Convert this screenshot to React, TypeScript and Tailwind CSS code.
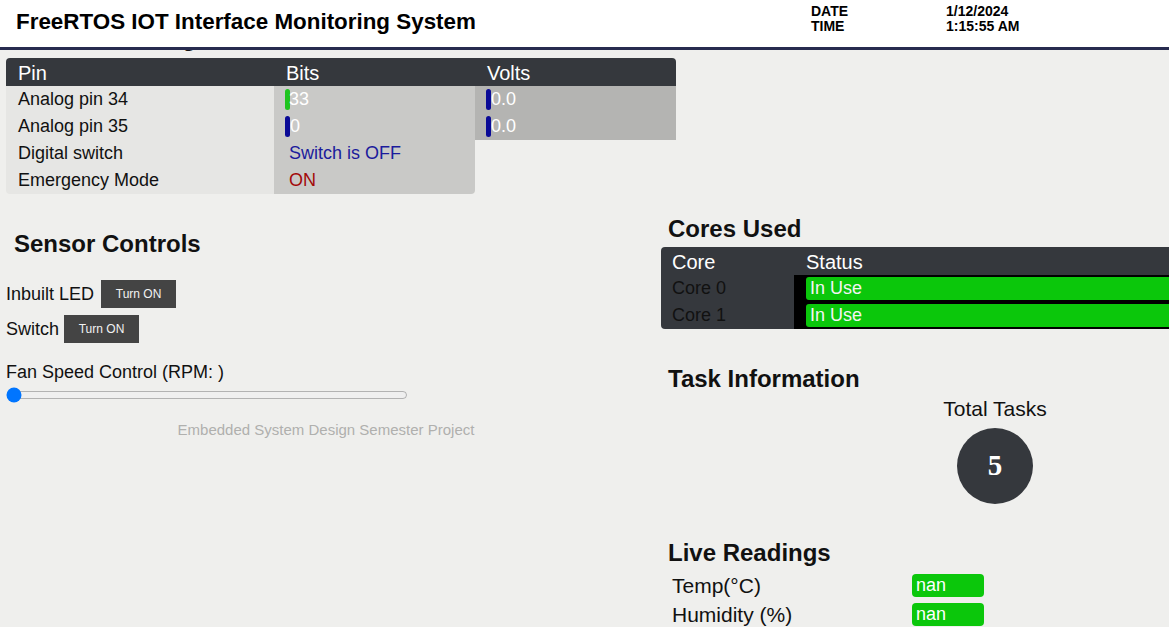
import React from "react";

function Bar({ color }: { color: string }) {
  return <span className={`inline-block w-[5px] h-[21px] rounded-[3px] ${color}`} />;
}

function PinRow({
  label,
  bits,
  volts,
  last,
}: {
  label: string;
  bits: React.ReactNode;
  volts?: React.ReactNode;
  last?: boolean;
}) {
  return (
    <div className="grid grid-cols-[268px_201px_201px] h-[27px]">
      <div className={`bg-[#e6e6e4] pl-[12px] flex items-center ${last ? "rounded-bl-[4px]" : ""}`}>{label}</div>
      <div className={`bg-[#c9c9c7] flex items-center ${last ? "rounded-br-[4px]" : ""}`}>{bits}</div>
      {volts ? <div className="bg-[#b4b4b2] flex items-center">{volts}</div> : <div />}
    </div>
  );
}

export default function App() {
  return (
    <div className="relative w-[1169px] h-[627px] overflow-hidden bg-[#efefed] text-[#111] font-['Liberation_Sans',Arial,sans-serif]">
      {/* fixed header */}
      <header className="absolute top-0 left-0 right-0 z-10 h-[50px] bg-white border-b-[3px] border-[#272b4f] flex items-start">
        <h1 className="pl-[16px] pt-[9px] text-[22.4px] leading-[26px] font-bold text-black">
          FreeRTOS IOT Interface Monitoring System
        </h1>
        <div className="absolute left-[811px] top-[4px] text-[14px] leading-[15px] font-bold text-black">
          <div>DATE</div>
          <div>TIME</div>
        </div>
        <div className="absolute left-[946px] top-[4px] text-[14px] leading-[15px] font-bold text-black">
          <div>1/12/2024</div>
          <div>1:15:55 AM</div>
        </div>
      </header>

      {/* scrolled content */}
      <main className="pt-[23px]">
        <h2 className="pl-[14px] text-[24px] leading-[30px] font-bold">Sensor Readings</h2>

        <div className="ml-[6px] mt-[5px] w-[670px] text-[18px]">
          <div className="grid grid-cols-[268px_201px_201px] h-[28px] bg-[#35383d] rounded-t-[4px] text-white text-[20px] items-center">
            <div className="pl-[12px]">Pin</div>
            <div className="pl-[12px]">Bits</div>
            <div className="pl-[12px]">Volts</div>
          </div>
          <PinRow
            label="Analog pin 34"
            bits={
              <div className="pl-[11px] flex items-center text-white">
                <Bar color="bg-[#1fc41f]" />
                <span className="-ml-[1px]">33</span>
              </div>
            }
            volts={
              <div className="pl-[11px] flex items-center text-white">
                <Bar color="bg-[#0a0a96]" />
                <span>0.0</span>
              </div>
            }
          />
          <PinRow
            label="Analog pin 35"
            bits={
              <div className="pl-[11px] flex items-center text-white">
                <Bar color="bg-[#0a0a96]" />
                <span>0</span>
              </div>
            }
            volts={
              <div className="pl-[11px] flex items-center text-white">
                <Bar color="bg-[#0a0a96]" />
                <span>0.0</span>
              </div>
            }
          />
          <PinRow label="Digital switch" bits={<span className="pl-[15px] text-[#1b1b9c]">Switch is OFF</span>} />
          <PinRow label="Emergency Mode" bits={<span className="pl-[15px] text-[#a30a0a]">ON</span>} last />
        </div>

        <div className="flex">
          {/* left column */}
          <section className="w-[652px] shrink-0">
            <h2 className="mt-[35px] pl-[14px] text-[24px] leading-[30px] font-bold">Sensor Controls</h2>
            <div className="mt-[21px] pl-[6px] flex flex-col gap-[7px] text-[18px]">
              <div className="flex items-center gap-[7px]">
                <span>Inbuilt LED</span>
                <button className="w-[75px] h-[28px] bg-[#444444] text-[#f2f2f2] text-[12px]">Turn ON</button>
              </div>
              <div className="flex items-center gap-[5px]">
                <span>Switch</span>
                <button className="w-[75px] h-[28px] bg-[#444444] text-[#f2f2f2] text-[12px]">Turn ON</button>
              </div>
            </div>
            <div className="mt-[18px] pl-[6px] text-[18px] leading-[22px]">Fan Speed Control (RPM: )</div>
            <input type="range" min={0} max={100} defaultValue={0} className="ml-[6px] mt-[4px] w-[402px] block" />
            <p className="mt-[16px] text-center text-[15px] text-[#b0b0ae]">Embedded System Design Semester Project</p>
          </section>

          {/* right column */}
          <section className="ml-[9px] w-[668px] shrink-0">
            <h2 className="mt-[20px] pl-[7px] text-[24px] leading-[30px] font-bold">Cores Used</h2>
            <div className="mt-[3px] w-[668px] rounded-[4px] overflow-hidden text-[18px]">
              <div className="grid grid-cols-[133px_1fr] h-[28px] bg-[#35383d] text-white text-[20px] items-center">
                <div className="pl-[11px]">Core</div>
                <div className="pl-[12px]">Status</div>
              </div>
              {["Core 0", "Core 1"].map((c) => (
                <div key={c} className="grid grid-cols-[133px_1fr] h-[27px]">
                  <div className="bg-[#35383d] text-[#111111] pl-[11px] flex items-center">{c}</div>
                  <div className="bg-black pl-[12px] flex items-center">
                    <div className="w-full h-[23px] rounded-[3px] bg-[#0bc70b] text-[#f4f4f4] pl-[4px] flex items-center">
                      In Use
                    </div>
                  </div>
                </div>
              ))}
            </div>

            <h2 className="mt-[35px] pl-[7px] text-[24px] leading-[30px] font-bold">Task Information</h2>
            <div className="flex flex-col items-center">
              <div className="mt-[3px] text-[21px] leading-[24px]">Total Tasks</div>
              <div className="mt-[7px] w-[76px] h-[76px] rounded-full bg-[#35383d] flex items-center justify-center text-white font-bold text-[29px] font-['Liberation_Serif','Times_New_Roman',serif]">
                5
              </div>
            </div>

            <h2 className="mt-[34px] pl-[7px] text-[24px] leading-[30px] font-bold">Live Readings</h2>
            <div className="mt-[3px] pl-[11px] flex flex-col text-[21px] leading-[29px]">
              <div className="flex items-center h-[29px]">
                <span className="w-[240px]">Temp(°C)</span>
                <span className="w-[72px] h-[23px] rounded-[4px] bg-[#0bc70b] text-white text-[18px] pl-[4px] flex items-center">nan</span>
              </div>
              <div className="flex items-center h-[29px]">
                <span className="w-[240px]">Humidity (%)</span>
                <span className="w-[72px] h-[23px] rounded-[4px] bg-[#0bc70b] text-white text-[18px] pl-[4px] flex items-center">nan</span>
              </div>
            </div>
          </section>
        </div>
      </main>
    </div>
  );
}
